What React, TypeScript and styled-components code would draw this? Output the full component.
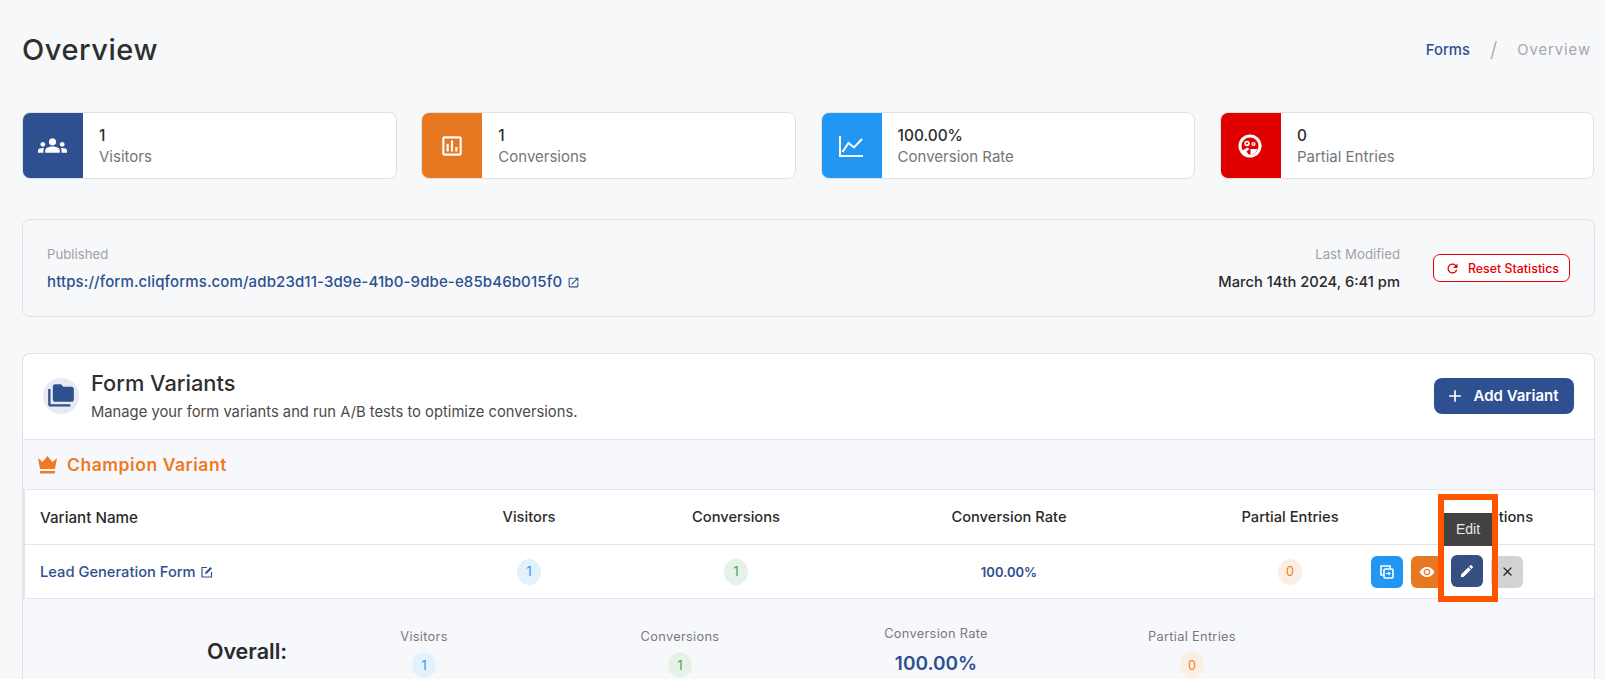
import React from "react";
import styled, { createGlobalStyle } from "styled-components";
import { MdGroups, MdOutlineAssessment, MdFolderCopy, MdEdit, MdClose, MdRemoveRedEye, MdOutlineOpenInNew, MdRefresh, MdAdd } from "react-icons/md";

const Global = createGlobalStyle`
  html, body { margin: 0; padding: 0; height: 679px; overflow: hidden; background: #f7f8fa; }
  body { font-family: "Inter", "Liberation Sans", sans-serif; color: #2a2a2a; }
  * { box-sizing: border-box; }
`;
const Page = styled.div`height: 679px; overflow: hidden; padding: 0 10px 0 22px;`;
const TopBar = styled.header`height: 112px; padding-top: 31px; display: flex; justify-content: space-between; align-items: flex-start;`;
const Title = styled.h1`margin: 0; font-size: 29px; line-height: 38px; font-weight: 500; letter-spacing: .55px; color: #2f2f2f;`;
const Crumbs = styled.nav`display: flex; align-items: center; font-size: 14.8px; line-height: 38px; gap: 20px; padding-right: 4px;`;
const Crumb = styled.span<{ $active?: boolean }>`color: ${p => (p.$active ? "#2e5090" : "#a6a8ac")}; font-weight: ${p => (p.$active ? 500 : 400)}; letter-spacing: ${p => (p.$active ? "0" : ".95px")};`;
const CrumbSep = styled.span`color: #a6a8ac; font-size: 21px; font-weight: 300;`;
const Stats = styled.section`display: grid; grid-template-columns: repeat(4, 374.5px); column-gap: 24.8px; height: 67px;`;
const StatCard = styled.article`display: flex; height: 67px; background: #fff; border: 1px solid #dfe1e4; border-radius: 8px; overflow: hidden;`;
const StatIcon = styled.div<{ $bg: string }>`width: 61px; margin: -1px 0 -1px -1px; flex: none; background: ${p => p.$bg}; color: #fff; display: flex; align-items: center; justify-content: center;`;
const StatBody = styled.div`padding: 12px 0 0 16px;`;
const StatValue = styled.div`font-size: 15.4px; line-height: 21px; font-weight: 500; color: #2d2d2d;`;
const StatLabel = styled.div`font-size: 15px; line-height: 21px; color: #73767a;`;
const Published = styled.section`margin-top: 40px; height: 98px; border: 1px solid #dfe1e4; border-radius: 8px; padding: 26px 24px 0; display: flex; justify-content: space-between;`;
const Meta = styled.div<{ $right?: boolean }>`text-align: ${p => (p.$right ? "right" : "left")};`;
const MetaLabel = styled.div`font-size: 13.2px; line-height: 16px; color: #a0a2a6;`;
const Url = styled.div`margin-top: 10px; font-size: 15px; line-height: 20px; letter-spacing: .12px; color: #2e5090; font-weight: 500; display: flex; align-items: center; gap: 5px;`;
const Date = styled.div`margin-top: 10px; font-size: 14.7px; line-height: 20px; color: #2a2a2a; font-weight: 500;`;
const MetaRight = styled.div`display: flex; gap: 33px;`;
const ResetBtn = styled.button`width: 137px; height: 28px; margin: 8px 0 0; background: #fff; border: 1px solid #e60000; border-radius: 7px; color: #e60000; font: 500 12.4px "Inter", sans-serif; display: flex; align-items: center; justify-content: center; gap: 8px; padding: 0 0 0 1px;`;
const Variants = styled.section`margin-top: 36px; background: #fff; border: 1px solid #dfe1e4; border-bottom: 0; border-radius: 8px 8px 0 0; height: 326px; overflow: hidden;`;
const VHead = styled.div`height: 86px; display: flex; align-items: center; justify-content: space-between; padding: 0 20px 2px 20px; border-bottom: 1px solid #e4e6ea;`;
const VHeadLeft = styled.div`display: flex; align-items: center; gap: 12px;`;
const FolderBadge = styled.div`width: 36px; height: 36px; border-radius: 50%; background: #e6eaf2; color: #2e5090; display: flex; align-items: center; justify-content: center;`;
const VTitle = styled.h2`margin: 0; font-size: 21.8px; line-height: 28px; font-weight: 500; color: #2f2f2f;`;
const VSub = styled.p`margin: 5px 0 0; font-size: 14.75px; line-height: 20px; color: #4a4a4a;`;
const AddBtn = styled.button`width: 140px; height: 36px; background: #2e5090; border: 0; border-radius: 8px; color: #fff; font: 600 15px "Inter", sans-serif; display: flex; align-items: center; justify-content: center; gap: 9px; padding: 0 5px 0 0;`;
const Champion = styled.div`height: 50px; background: #f7f8fc; display: flex; align-items: center; gap: 10px; padding-left: 15px; border-bottom: 1px solid #e4e6ea; color: #f07a1f; font-size: 17.5px; letter-spacing: .55px; font-weight: 600;`;
const Table = styled.div`border-left: 2px solid #e4e6ea;`;
const Row = styled.div<{ $h: number }>`display: grid; grid-template-columns: 398px 212px 202px 344px 218px 1fr; height: ${p => p.$h}px; align-items: center; border-bottom: 1px solid #e4e6ea; background: #fff;`;
const Head = styled.div<{ $left?: boolean }>`font-size: ${p => (p.$left ? "15.2px" : "14.7px")}; font-weight: 500; color: #2a2a2a; text-align: ${p => (p.$left ? "left" : "center")}; padding-left: ${p => (p.$left ? "15px" : "0")};`;
const ActionsHead = styled(Head)`padding-left: 20px;`;
const Cell = styled.div`display: flex; justify-content: center; align-items: center;`;
const NameCell = styled.div`padding-left: 15px; color: #2e5090; font-size: 14.7px; font-weight: 500; display: flex; align-items: center; gap: 5px;`;
const Pill = styled.span<{ $bg: string; $fg: string }>`width: 24px; height: 26px; border-radius: 50%; background: ${p => p.$bg}; color: ${p => p.$fg}; font-size: 12.5px; display: inline-flex; align-items: center; justify-content: center;`;
const Rate = styled.span`font-size: 13px; font-weight: 600; color: #2e5090;`;
const Actions = styled.div`display: flex; gap: 8px; margin-left: -28px; align-items: center;`;
const ActionBtn = styled.button<{ $bg: string; $fg?: string }>`position: relative; width: 32px; height: 32px; border: 0; padding: 0; border-radius: 6px; background: ${p => p.$bg}; color: ${p => p.$fg || "#fff"}; display: flex; align-items: center; justify-content: center;`;
const EditBtn = styled(ActionBtn)`z-index: 1; margin-top: -2px;`;
const Highlight = styled.div`
  position: absolute; left: -13px; top: -61px; width: 60px; height: 108px; border: 6px solid #ff5500; pointer-events: none;
  &::before { content: ""; position: absolute; left: 0; right: 0; top: 0; height: 13px; background: #fff; }
`;
const Tip = styled.div`position: absolute; left: 0; right: 0; top: 13px; height: 33px; background: #424242; color: #e8e8e8; font-size: 14px; display: flex; align-items: center; justify-content: center;`;
const Overall = styled.div`background: #f7f8fc; height: 90px; display: grid; grid-template-columns: 175px 98px 256px 256px 256px 256px; align-items: start; padding-top: 30px;`;
const OverallTitle = styled.div`font-size: 21.5px; font-weight: 600; line-height: 26px; margin-top: 9px; text-align: center; grid-column: 2; color: #2a2a2a; white-space: nowrap;`;
const OverallCol = styled.div`display: flex; flex-direction: column; align-items: center; gap: 7px;`;
const RateCol = styled(OverallCol)`margin-top: -3px; gap: 9px;`;
const OverallLabel = styled.div`font-size: 12.8px; line-height: 16px; color: #77797d; letter-spacing: .3px;`;
const OverallRate = styled.div`font-size: 19px; font-weight: 600; line-height: 26px; color: #2e5090;`;

const TrendIcon = () => (
  <svg width="26" height="26" viewBox="0 0 26 26" fill="none" stroke="#fff" strokeWidth="2"><path d="M2 3v20h23" /><path d="M4.500 19L10.500 10l5.500 4.500L24 6" /></svg>
);
const PartialIcon = () => (
  <svg width="24" height="24" viewBox="0 0 24 24"><circle cx="12" cy="12" r="11.500" fill="#fff" /><circle cx="12" cy="12" r="8.500" fill="#e00000" /><circle cx="9" cy="9.500" r="2.700" fill="#fff" /><circle cx="9" cy="9.500" r="1.100" fill="#e00000" /><circle cx="15.500" cy="10" r="2.100" fill="#fff" /><circle cx="15.500" cy="10" r=".8" fill="#e00000" /><path d="M3.500 17l6-3.500 2 1.500-3 2.500 2 3-5-1.500z" fill="#fff" /><path d="M12.500 15h7l-2.500 4-4.500 1.500z" fill="#fff" /></svg>
);
const Crown = () => (
  <svg width="19" height="18" viewBox="0 0 19 18" fill="#ee7b24"><path d="M0 2l4.500 4L9.500 0l5 6L19 2l-2 11H2z" /><rect x="2" y="15" width="15" height="2.500" /></svg>
);
const CopyIcon = () => (
  <svg width="16" height="16" viewBox="0 0 16 16" fill="none" stroke="#fff" strokeWidth="1.6"><path d="M5 11H2V2h9v3" /><rect x="5" y="5" width="9" height="9" rx="1" /><path d="M7 9.500h4M9.500 8l1.500 1.500L9.500 11" strokeWidth="1.2" /></svg>
);
const EditSquare = () => (
  <svg width="12" height="12" viewBox="0 0 12 12" fill="none" stroke="#2e5090" strokeWidth="1.2"><path d="M6 1.500H1v9.500h9.500V6" /><path d="M4 8l.5-2L9.500 1l1.500 1.500L6 7.500z" fill="#2e5090" stroke="none" /></svg>
);

export default function App() {
  return (
    <Page>
      <Global />
      <TopBar>
        <Title>Overview</Title>
        <Crumbs><Crumb $active>Forms</Crumb><CrumbSep>/</CrumbSep><Crumb>Overview</Crumb></Crumbs>
      </TopBar>
      <Stats>
        <StatCard><StatIcon $bg="#2e5090"><MdGroups size={29} /></StatIcon><StatBody><StatValue>1</StatValue><StatLabel>Visitors</StatLabel></StatBody></StatCard>
        <StatCard><StatIcon $bg="#e87722"><MdOutlineAssessment size={26} /></StatIcon><StatBody><StatValue>1</StatValue><StatLabel>Conversions</StatLabel></StatBody></StatCard>
        <StatCard><StatIcon $bg="#2196f3"><TrendIcon /></StatIcon><StatBody><StatValue>100.00%</StatValue><StatLabel>Conversion Rate</StatLabel></StatBody></StatCard>
        <StatCard><StatIcon $bg="#e00000"><PartialIcon /></StatIcon><StatBody><StatValue>0</StatValue><StatLabel>Partial Entries</StatLabel></StatBody></StatCard>
      </Stats>
      <Published>
        <Meta>
          <MetaLabel>Published</MetaLabel>
          <Url>https://form.cliqforms.com/adb23d11-3d9e-41b0-9dbe-e85b46b015f0 <MdOutlineOpenInNew size={13} /></Url>
        </Meta>
        <MetaRight>
          <Meta $right>
            <MetaLabel>Last Modified</MetaLabel>
            <Date>March 14th 2024, 6:41 pm</Date>
          </Meta>
          <ResetBtn><MdRefresh size={15} />Reset Statistics</ResetBtn>
        </MetaRight>
      </Published>
      <Variants>
        <VHead>
          <VHeadLeft>
            <FolderBadge><MdFolderCopy size={28} /></FolderBadge>
            <div>
              <VTitle>Form Variants</VTitle>
              <VSub>Manage your form variants and run A/B tests to optimize conversions.</VSub>
            </div>
          </VHeadLeft>
          <AddBtn><MdAdd size={20} />Add Variant</AddBtn>
        </VHead>
        <Champion><Crown />Champion Variant</Champion>
        <Table>
          <Row $h={55}>
            <Head $left>Variant Name</Head><Head>Visitors</Head><Head>Conversions</Head><Head>Conversion Rate</Head><Head>Partial Entries</Head><ActionsHead>Actions</ActionsHead>
          </Row>
          <Row $h={54}>
            <NameCell>Lead Generation Form <EditSquare /></NameCell>
            <Cell><Pill $bg="#e3f1fc" $fg="#2196f3">1</Pill></Cell>
            <Cell><Pill $bg="#e6f2e8" $fg="#43a047">1</Pill></Cell>
            <Cell><Rate>100.00%</Rate></Cell>
            <Cell><Pill $bg="#fbeee4" $fg="#ee7b24">0</Pill></Cell>
            <Actions>
              <ActionBtn $bg="#2196f3"><CopyIcon /></ActionBtn>
              <ActionBtn $bg="#e87722"><MdRemoveRedEye size={16} /></ActionBtn>
              <EditBtn $bg="#344f80"><MdEdit size={16} /><Highlight><Tip>Edit</Tip></Highlight></EditBtn>
              <ActionBtn $bg="#d2d2d2" $fg="#222"><MdClose size={15} /></ActionBtn>
            </Actions>
          </Row>
        </Table>
        <Overall>
          <OverallTitle>Overall:</OverallTitle>
          <OverallCol><OverallLabel>Visitors</OverallLabel><Pill $bg="#e3f1fc" $fg="#2196f3">1</Pill></OverallCol>
          <OverallCol><OverallLabel>Conversions</OverallLabel><Pill $bg="#e6f2e8" $fg="#43a047">1</Pill></OverallCol>
          <RateCol><OverallLabel>Conversion Rate</OverallLabel><OverallRate>100.00%</OverallRate></RateCol>
          <OverallCol><OverallLabel>Partial Entries</OverallLabel><Pill $bg="#fbeee4" $fg="#ee7b24">0</Pill></OverallCol>
        </Overall>
      </Variants>
    </Page>
  );
}
